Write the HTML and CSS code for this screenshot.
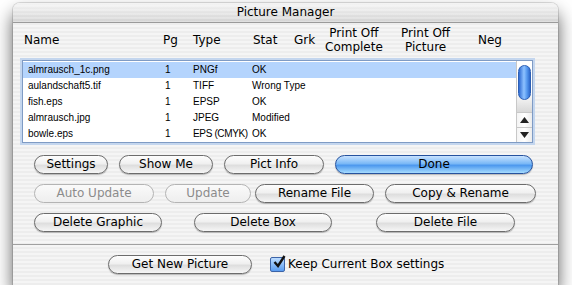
FILE: index.html
```html
<!DOCTYPE html>
<html>
<head>
    <title>Picture Manager</title>
    <link rel="stylesheet" href="styles.css">
</head>
<body>
    <div class="window">
        <div class="titlebar">Picture Manager</div>

        <div class="content">
            <div class="headers">
                <div class="col-name">Name</div>
                <div class="col-pg">Pg</div>
                <div class="col-type">Type</div>
                <div class="col-stat">Stat</div>
                <div class="col-grk">Grk</div>
                <div class="col-poc">Print Off<br>Complete</div>
                <div class="col-pop">Print Off<br>Picture</div>
                <div class="col-neg">Neg</div>
            </div>

            <div class="listbox">
                <div class="rows">
                    <div class="row selected">
                        <span class="c-name">almrausch_1c.png</span><span class="c-pg">1</span><span class="c-type">PNGf</span><span class="c-stat">OK</span>
                    </div>
                    <div class="row">
                        <span class="c-name">aulandschaft5.tif</span><span class="c-pg">1</span><span class="c-type">TIFF</span><span class="c-stat">Wrong Type</span>
                    </div>
                    <div class="row">
                        <span class="c-name">fish.eps</span><span class="c-pg">1</span><span class="c-type">EPSP</span><span class="c-stat">OK</span>
                    </div>
                    <div class="row">
                        <span class="c-name">almrausch.jpg</span><span class="c-pg">1</span><span class="c-type">JPEG</span><span class="c-stat">Modified</span>
                    </div>
                    <div class="row">
                        <span class="c-name">bowle.eps</span><span class="c-pg">1</span><span class="c-type tight">EPS (CMYK)</span><span class="c-stat">OK</span>
                    </div>
                </div>
                <div class="scrollbar">
                    <div class="track">
                        <div class="thumb"></div>
                    </div>
                    <div class="arrow">
                        <svg width="9" height="6" viewBox="0 0 9 6"><path d="M4.5 0 L9 6 L0 6 Z" fill="#222"/></svg>
                    </div>
                    <div class="arrow">
                        <svg width="9" height="6" viewBox="0 0 9 6"><path d="M0 0 L9 0 L4.5 6 Z" fill="#222"/></svg>
                    </div>
                </div>
            </div>

            <div class="btn-row row1">
                <button class="btn w-settings">Settings</button>
                <button class="btn w-showme">Show Me</button>
                <button class="btn w-pict">Pict Info</button>
                <button class="btn default w-done">Done</button>
            </div>
            <div class="btn-row row2">
                <button class="btn disabled w-auto">Auto Update</button>
                <button class="btn disabled w-update">Update</button>
                <button class="btn w-rename">Rename File</button>
                <button class="btn w-copy">Copy &amp; Rename</button>
            </div>
            <div class="btn-row row3">
                <button class="btn w-delg">Delete Graphic</button>
                <button class="btn w-delb">Delete Box</button>
                <button class="btn w-delf">Delete File</button>
            </div>
        </div>

        <div class="footer">
            <button class="btn w-getnew">Get New Picture</button>
            <label class="check">
                <span class="box">
                    <svg width="14" height="14" viewBox="0 0 14 14"><path d="M2.5 7 L6 11 L12.5 1" fill="none" stroke="#111" stroke-width="2.4"/></svg>
                </span>
                Keep Current Box settings
            </label>
        </div>
    </div>
</body>
</html>
```

FILE: styles.css
```css
body {
    margin: 0;
    background: #fff;
    font-family: "DejaVu Sans", sans-serif;
    font-size: 12px;
    color: #000;
}
.window {
    margin: 3px 0 0 13px;
    width: 545px;
    height: 282px;
    border-radius: 7px 7px 0 0;
    background: repeating-linear-gradient(#ededed 0px, #ededed 2px, #f5f5f5 2px, #f5f5f5 4px);
    box-shadow: 0 10px 18px rgba(0, 0, 0, 0.65), 0 0 0 1px rgba(0, 0, 0, 0.12);
    display: flex;
    flex-direction: column;
    overflow: hidden;
}
.titlebar {
    height: 19px;
    line-height: 19px;
    text-align: center;
    font-size: 12px;
    background: repeating-linear-gradient(rgba(255, 255, 255, 0) 0px, rgba(255, 255, 255, 0) 2px, rgba(255, 255, 255, 0.25) 2px, rgba(255, 255, 255, 0.25) 4px), linear-gradient(#f4f4f4, #d4d4d4);
    border-bottom: 1px solid #9a9a9a;
}
.content {
    flex: 1;
    padding: 0 0 0 9px;
}
.headers {
    position: relative;
    height: 37px;
    font-size: 12px;
    line-height: 14px;
}
.headers div {
    position: absolute;
}
.col-name { left: 2px; top: 10px; }
.col-pg { left: 141px; top: 10px; }
.col-type { left: 171px; top: 10px; }
.col-stat { left: 231px; top: 10px; }
.col-grk { left: 272px; top: 10px; }
.col-poc { left: 303px; top: 3px; text-align: center; }
.col-pop { left: 379px; top: 3px; text-align: center; }
.col-neg { left: 456px; top: 10px; }
.listbox {
    width: 509px;
    height: 81px;
    border: 1px solid #7f9bc4;
    box-shadow: 0 0 0 2px #c4d6ee;
    background: #fff;
    display: flex;
    font-family: "Liberation Sans", sans-serif;
    font-size: 10px;
}
.rows {
    flex: 1;
    padding-top: 1px;
}
.row {
    height: 16px;
    line-height: 16px;
    display: flex;
}
.row.selected {
    background: #b4d4fd;
}
.c-name { width: 137px; padding-left: 5px; }
.c-pg { width: 28px; }
.c-type { width: 59px; white-space: nowrap; }
.c-type.tight { letter-spacing: -0.35px; }
.c-stat { width: 80px; }
.scrollbar {
    width: 15px;
    border-left: 1px solid #c8c8c8;
    display: flex;
    flex-direction: column;
    background: linear-gradient(90deg, #e6e6e6, #fafafa 50%, #e2e2e2);
}
.track {
    flex: 1;
    padding: 4px 1px 0 1px;
    background: linear-gradient(#fff 0, #fff 60%, #d8d8d8 100%);
}
.thumb {
    height: 33px;
    border-radius: 7px;
    border: 1px solid #2c5fb5;
    background: linear-gradient(90deg, #2f6bd2, #8ec2ff 45%, #5a9cf0 70%, #2c68cc);
}
.arrow {
    height: 14px;
    border-top: 1px solid #c8c8c8;
    display: flex;
    align-items: center;
    justify-content: center;
    background: linear-gradient(90deg, #f4f4f4, #fff 50%, #ececec);
}
.btn-row {
    display: flex;
    padding-left: 12px;
    margin-top: 10px;
}
.row1 { margin-top: 12px; }
.btn {
    height: 19px;
    border: 1px solid #6c6c6c;
    border-radius: 10px;
    background: linear-gradient(#fdfdfd 0%, #f0f0f0 45%, #dedede 55%, #f6f6f6 100%);
    box-shadow: 0 1px 1px rgba(0, 0, 0, 0.25);
    font-family: "DejaVu Sans", sans-serif;
    font-size: 12px;
    line-height: 17px;
    padding: 0;
    color: #000;
    margin-right: 11px;
}
.btn.default {
    border-color: #26529e;
    background: linear-gradient(#c8e2ff 0%, #7ab8f6 45%, #4c98ee 55%, #a6dcff 100%);
}
.btn.disabled {
    color: #8c8c8c;
    border-color: #b4b4b4;
    box-shadow: none;
    background: linear-gradient(#fafafa, #eeeeee);
}
.w-settings { width: 74px; }
.w-showme { width: 94px; }
.w-pict { width: 100px; }
.w-done { width: 198px; }
.w-auto { width: 120px; }
.w-update { width: 86px; margin-right: 4px; }
.w-rename { width: 119px; }
.w-copy { width: 151px; }
.w-delg { width: 128px; margin-right: 32px; }
.w-delb { width: 138px; margin-right: 44px; }
.w-delf { width: 139px; }
.footer {
    height: 38px;
    border-top: 1px solid #a0a0a0;
    display: flex;
    align-items: center;
    padding-left: 95px;
    padding-bottom: 2px;
}
.footer .btn {
    width: 144px;
    margin-right: 18px;
}
.check {
    display: flex;
    align-items: center;
    gap: 3px;
    font-size: 12px;
}
.box {
    width: 13px;
    height: 13px;
    border: 1px solid #3c64a8;
    border-radius: 2px;
    background: linear-gradient(#bcdcff, #5a9cf0);
    position: relative;
}
.box svg {
    position: absolute;
    left: 1px;
    top: -3px;
}
```
